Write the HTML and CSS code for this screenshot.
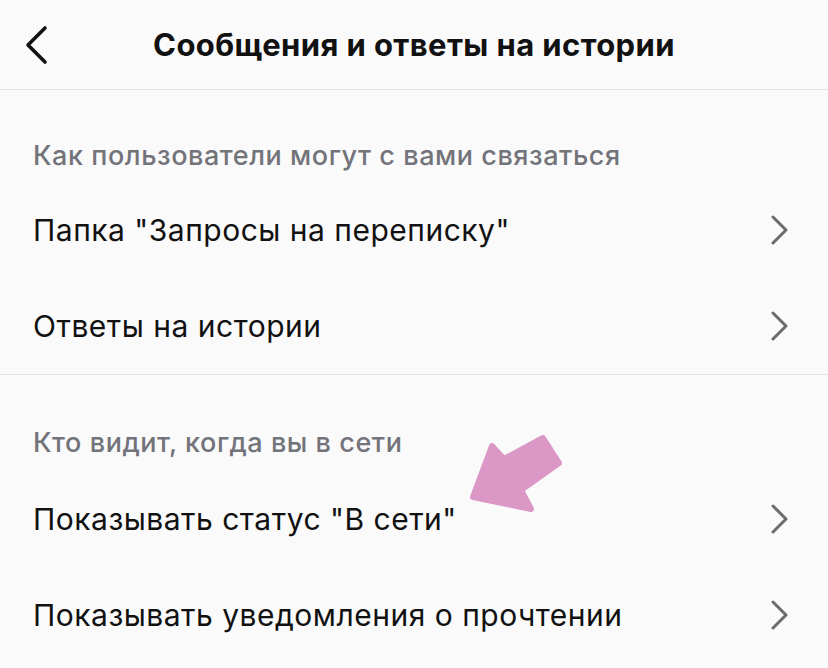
FILE: index.html
```html
<!DOCTYPE html>
<html lang="ru">
<head>
<meta charset="utf-8">
<link rel="stylesheet" href="styles.css">
</head>
<body>
<div class="screen">
  <header class="topbar">
    <button class="back" aria-label="Назад">
      <svg width="24" height="40" viewBox="0 0 24 40"><path d="M20 3 L3 20 L20 37" fill="none" stroke="#111" stroke-width="3.6" stroke-linecap="round" stroke-linejoin="round"/></svg>
    </button>
    <h1 class="title">Сообщения и ответы на истории</h1>
  </header>

  <section class="section first">
    <h2 class="section-title">Как пользователи могут с вами связаться</h2>
    <div class="row"><span class="label">Папка "Запросы на переписку"</span><svg class="chev" width="20" height="30" viewBox="0 0 20 30"><path d="M3 2 L16 15 L3 28" fill="none" stroke="#6c6c70" stroke-width="3" stroke-linecap="round" stroke-linejoin="round"/></svg></div>
    <div class="row"><span class="label">Ответы на истории</span><svg class="chev" width="20" height="30" viewBox="0 0 20 30"><path d="M3 2 L16 15 L3 28" fill="none" stroke="#6c6c70" stroke-width="3" stroke-linecap="round" stroke-linejoin="round"/></svg></div>
  </section>

  <section class="section second">
    <h2 class="section-title">Кто видит, когда вы в сети</h2>
    <div class="row"><span class="label">Показывать статус "В сети"</span><svg class="chev" width="20" height="30" viewBox="0 0 20 30"><path d="M3 2 L16 15 L3 28" fill="none" stroke="#6c6c70" stroke-width="3" stroke-linecap="round" stroke-linejoin="round"/></svg></div>
    <div class="row"><span class="label">Показывать уведомления о прочтении</span><svg class="chev" width="20" height="30" viewBox="0 0 20 30"><path d="M3 2 L16 15 L3 28" fill="none" stroke="#6c6c70" stroke-width="3" stroke-linecap="round" stroke-linejoin="round"/></svg></div>
  </section>

  <svg class="pointer" width="828" height="668" viewBox="0 0 828 668">
    <polygon points="473,497 492,446 504,459 543,438 559,463 521,490 531,509" fill="#db98c6" stroke="#db98c6" stroke-width="6" stroke-linejoin="round"/>
  </svg>
</div>
</body>
</html>
```

FILE: styles.css
```css
* { box-sizing: border-box; }
html, body { margin: 0; padding: 0; }
body {
  background: #fafafa;
  font-family: Inter, "Noto Sans", "Liberation Sans", sans-serif;
  color: #111;
}
.screen {
  position: relative;
  width: 828px;
  height: 668px;
  overflow: hidden;
}
.topbar {
  height: 90px;
  border-bottom: 1px solid #e3e3e3;
  display: flex;
  align-items: center;
  justify-content: center;
  position: relative;
}
.back {
  position: absolute;
  left: 25px;
  top: 25px;
  background: none;
  border: 0;
  padding: 0;
  display: flex;
}
.title {
  margin: 0;
  font-size: 31px;
  font-weight: 700;
  letter-spacing: 0.4px;
  color: #111;
}
.section {
  display: flex;
  flex-direction: column;
}
.first { border-bottom: 1px solid #e3e3e3; }
.section-title {
  margin: 0;
  font-size: 27px;
  font-weight: 500;
  letter-spacing: 0.55px;
  color: #73737a;
  padding: 0 33px;
  display: flex;
  align-items: center;
}
.first .section-title { height: 92px; padding-top: 38px; }
.second .section-title { height: 96px; padding-top: 38px; }
.row {
  height: 96px;
  display: flex;
  align-items: center;
  justify-content: space-between;
  padding: 0 38px 0 33px;
}
.label {
  font-size: 30px;
  font-weight: 400;
  letter-spacing: 0.5px;
  color: #111;
}
.chev { display: block; }
.pointer {
  position: absolute;
  left: 0;
  top: 0;
  pointer-events: none;
}
```
